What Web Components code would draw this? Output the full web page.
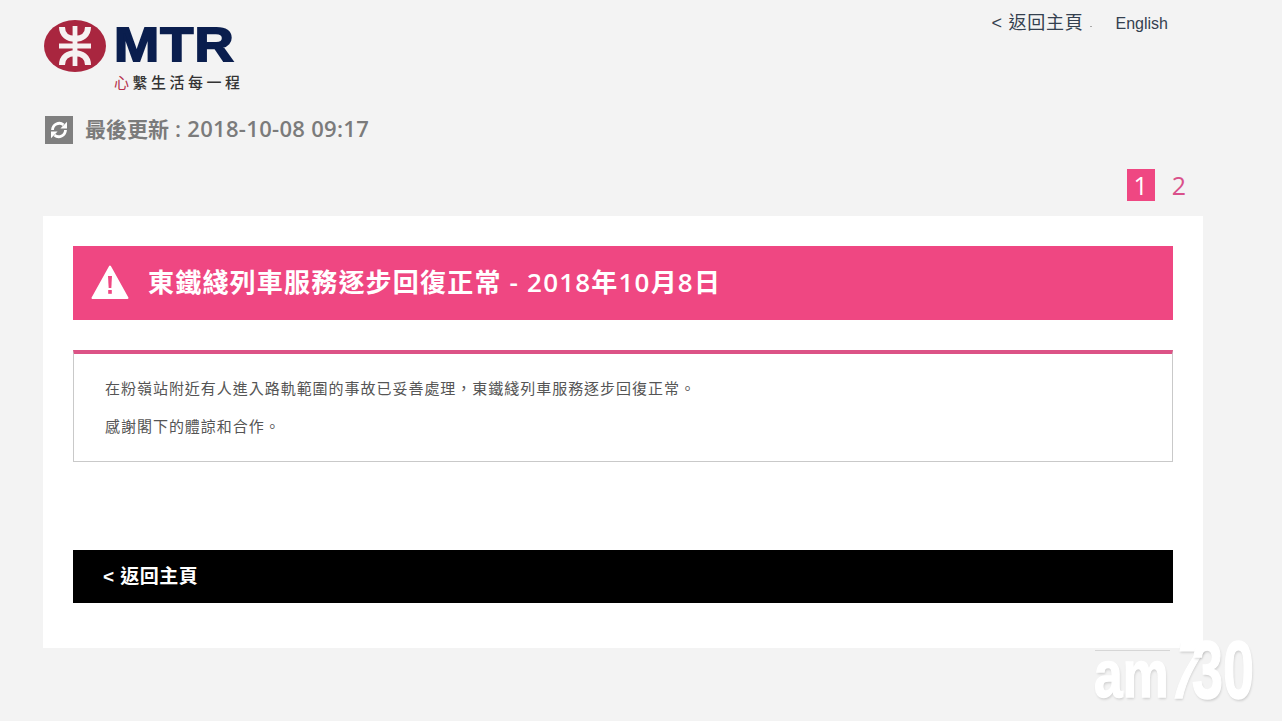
<!DOCTYPE html>
<html lang="zh-Hant">
<head>
<meta charset="utf-8">
<title>MTR</title>
<style>
  html, body { margin: 0; height: 721px; overflow: hidden; }
  body { background: #f3f3f3; font-family: "Open Sans", "Noto Sans CJK TC", sans-serif; }
</style>
</head>
<body>
<mtr-page>
  <mtr-header slot="header"></mtr-header>
  <mtr-pager slot="pager"></mtr-pager>
  <notice-card>
    <alert-banner>東鐵綫列車服務逐步回復正常 - 2018年10月8日</alert-banner>
    <notice-body>
      <p>在粉嶺站附近有人進入路軌範圍的事故已妥善處理，東鐵綫列車服務逐步回復正常。</p>
      <p>感謝閣下的體諒和合作。</p>
    </notice-body>
    <back-bar>&lt; 返回主頁</back-bar>
  </notice-card>
</mtr-page>
<am-watermark></am-watermark>

<script>
  class MtrPage extends HTMLElement {
    constructor() {
      super();
      this.attachShadow({ mode: 'open' });
      this.shadowRoot.innerHTML = `
        <style>
          :host { display: block; width: 1160px; margin-left: 43px; }
        </style>
        <slot name="header"></slot>
        <slot name="pager"></slot>
        <slot></slot>
      `;
    }
  }

  class MtrHeader extends HTMLElement {
    constructor() {
      super();
      this.attachShadow({ mode: 'open' });
      this.shadowRoot.innerHTML = `
        <style>
          :host { display: flex; justify-content: space-between; height: 169px; }
          .brand { padding-top: 20px; }
          .logo { display: flex; align-items: flex-start; height: 52px; }
          .logo svg { display: block; margin-left: 1px; }
          .word {
            margin-left: 8px; margin-top: -1px;
            font: 700 48px/52px "Liberation Sans", sans-serif;
            letter-spacing: 1px; color: #0a1e4e;
            -webkit-text-stroke: 1.8px #0a1e4e;
            transform: scaleX(1.13); transform-origin: 0 0;
          }
          .tag {
            margin: 1px 0 0 71px;
            font: 500 15px/18px "Noto Sans CJK TC", sans-serif;
            letter-spacing: 3.5px; color: #333; white-space: nowrap;
          }
          .tag b { font-weight: 400; color: #b5304a; }
          .stamp { display: flex; align-items: flex-start; margin: 25px 0 0 2px; }
          .stamp svg { display: block; }
          .stamp span {
            margin: -2px 0 0 12px;
            font: 600 22px/28px "Open Sans", "Noto Sans CJK TC", sans-serif;
            letter-spacing: .3px; color: #7b7b7b; white-space: nowrap;
          }
          .stamp b { font-weight: 600; font-size: 21px; letter-spacing: 0; }
          nav {
            display: flex; align-items: center; height: 23px; margin: 12px 35px 0 0;
            color: #34404f; white-space: nowrap;
          }
          nav .home { font: 400 18px/23px "Liberation Sans", "Noto Sans CJK TC", sans-serif; letter-spacing: .75px; }
          nav i { width: 2px; height: 1px; background: #aaa; margin: 6px 24px 0 6px; }
          nav .lang { font: 400 16px/23px "Liberation Sans", sans-serif; }
        </style>
        <div class="brand">
          <div class="logo">
            <svg width="62" height="52" viewBox="0 0 62 52">
              <ellipse cx="31" cy="26" rx="31" ry="26" fill="#a9263f"/>
              <g fill="none" stroke="#f6f1f1" stroke-width="6">
                <path d="M18 7 C18 15 24 18.8 31 18.8 C38 18.8 44 15 44 7"/>
                <path d="M18 45 C18 37 24 33.2 31 33.2 C38 33.2 44 37 44 45"/>
                <path d="M31 6 V46" stroke-width="4.8"/>
                <path d="M15 26 H47" stroke-width="5"/>
              </g>
            </svg>
            <span class="word">MTR</span>
          </div>
          <div class="tag"><b>心</b>繫生活每一程</div>
          <div class="stamp">
            <svg width="28" height="28" viewBox="0 0 28 28">
              <rect width="28" height="28" fill="#7f7f7f"/>
              <g fill="none" stroke="#fff" stroke-width="2.8">
                <path d="M7.5 14 A6.8 6.8 0 0 1 18.5 8.8"/>
                <path d="M20.5 14 A6.8 6.8 0 0 1 9.5 19.2"/>
              </g>
              <path d="M22 5.8 V12.4 H15.4 Z M6 22.2 V15.6 H12.6 Z" fill="#fff"/>
            </svg>
            <span><b>最後更新</b> : 2018-10-08 09:17</span>
          </div>
        </div>
        <nav>
          <span class="home">&lt; 返回主頁</span><i></i><span class="lang">English</span>
        </nav>
      `;
    }
  }

  class MtrPager extends HTMLElement {
    constructor() {
      super();
      this.attachShadow({ mode: 'open' });
      this.shadowRoot.innerHTML = `
        <style>
          :host {
            display: flex; justify-content: flex-end; height: 47px; padding-right: 17px;
            font: 400 25px/32px "Open Sans", sans-serif; color: #d9508a;
          }
          span { display: block; height: 32px; text-align: center; }
          .on { width: 28px; background: #ef4782; color: #fff; }
          .off { margin-left: 17px; }
        </style>
        <span class="on">1</span><span class="off">2</span>
      `;
    }
  }

  class NoticeCard extends HTMLElement {
    constructor() {
      super();
      this.attachShadow({ mode: 'open' });
      this.shadowRoot.innerHTML = `
        <style>
          :host { display: block; box-sizing: border-box; height: 432px; padding: 30px; background: #fff; }
        </style>
        <slot></slot>
      `;
    }
  }

  class AlertBanner extends HTMLElement {
    constructor() {
      super();
      this.attachShadow({ mode: 'open' });
      this.shadowRoot.innerHTML = `
        <style>
          :host {
            display: flex; align-items: center; box-sizing: border-box; height: 74px;
            padding: 0 0 2px 18px;
            background: #ef4782; color: #fff;
            font: 600 26px/72px "Open Sans", "Noto Sans CJK TC", sans-serif; letter-spacing: 1.2px;
            white-space: nowrap;
          }
          svg { display: block; margin-right: 19px; flex: none; }
        </style>
        <svg width="38" height="35" viewBox="0 0 38 35">
          <path d="M19 1.5 L36.5 33 H1.5 Z" fill="#fff" stroke="#fff" stroke-width="2" stroke-linejoin="round"/>
          <path d="M17 11 H21 L20.3 23 H17.7 Z" fill="#ef4782"/>
          <rect x="17.2" y="25" width="3.6" height="3.8" fill="#ef4782"/>
        </svg>
        <slot></slot>
      `;
    }
  }

  class NoticeBody extends HTMLElement {
    constructor() {
      super();
      this.attachShadow({ mode: 'open' });
      this.shadowRoot.innerHTML = `
        <style>
          :host {
            display: block; box-sizing: border-box; height: 112px; margin-top: 30px;
            padding: 24px 31px 0;
            background: #fff; border: 1px solid #c9c9c9; border-top: 4px solid #dc5386;
            font: 400 15px/20px "Noto Sans CJK TC", sans-serif; letter-spacing: .97px; color: #555;
            white-space: nowrap;
          }
          ::slotted(p) { margin: 0 0 18px; }
        </style>
        <slot></slot>
      `;
    }
  }

  class BackBar extends HTMLElement {
    constructor() {
      super();
      this.attachShadow({ mode: 'open' });
      this.shadowRoot.innerHTML = `
        <style>
          :host {
            display: block; height: 53px; margin-top: 88px; padding-left: 30px;
            background: #000; color: #fff;
            font: 700 19px/54px "Liberation Sans", "Noto Sans CJK TC", serif; letter-spacing: .5px;
          }
        </style>
        <slot></slot>
      `;
    }
  }

  // watermark sits over the page corner
  class AmWatermark extends HTMLElement {
    constructor() {
      super();
      this.attachShadow({ mode: 'open' });
      this.shadowRoot.innerHTML = `
        <style>
          :host { position: absolute; left: 1094px; top: 636px; width: 170px; height: 70px; pointer-events: none; }
          span {
            position: absolute; display: block; white-space: nowrap; color: #fff;
            font-family: "Liberation Sans", sans-serif; font-weight: 700; transform-origin: 0 100%;
            -webkit-text-stroke: 1.5px #fff;
            text-shadow: 1px 2px 3px rgba(0,0,0,.16);
          }
          .am { left: 0; top: 5px; font-size: 66px; line-height: 66px; transform: scaleX(.78); }
          .sev { left: 71px; top: -7px; font-size: 82px; line-height: 82px; transform: skewX(-12deg) scaleX(.62); }
          .num { left: 98px; top: -7px; font-size: 82px; line-height: 82px; transform: scaleX(.68); }
          i { position: absolute; left: 1px; top: 14px; width: 75px; height: 1px; background: #d6d6d6; }
        </style>
        <i></i>
        <span class="am">am</span>
        <span class="sev">7</span>
        <span class="num">30</span>
      `;
    }
  }

  customElements.define('mtr-page', MtrPage);
  customElements.define('mtr-header', MtrHeader);
  customElements.define('mtr-pager', MtrPager);
  customElements.define('notice-card', NoticeCard);
  customElements.define('alert-banner', AlertBanner);
  customElements.define('notice-body', NoticeBody);
  customElements.define('back-bar', BackBar);
  customElements.define('am-watermark', AmWatermark);
</script>
</body>
</html>
